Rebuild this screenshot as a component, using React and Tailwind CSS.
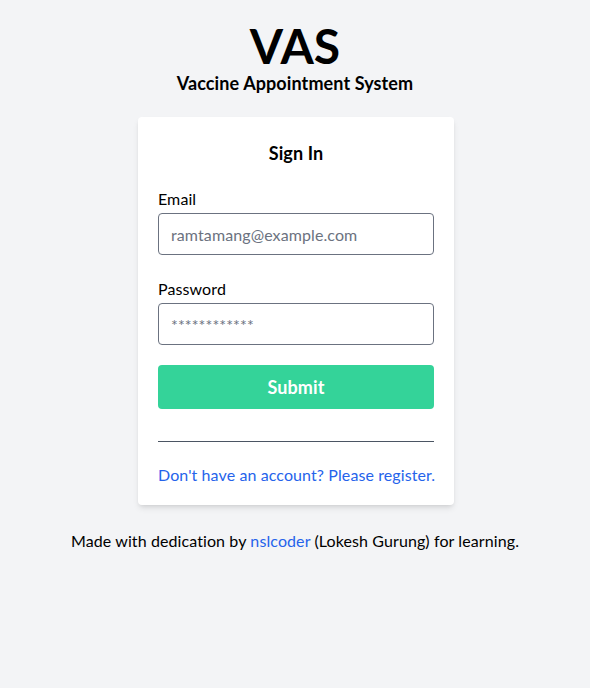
export default function App() {
  return (
    <main
      className="min-h-screen bg-[#f3f4f6] tracking-[0.1px] text-black"
      style={{ fontFamily: 'Lato, "Noto Sans", sans-serif' }}
    >
      <div className="flex flex-col items-center pt-5">
        <h1 className="text-5xl font-bold leading-[52px]">VAS</h1>
        <h2 className="text-lg font-bold leading-[22px]">Vaccine Appointment System</h2>

        <div className="mt-[23px] ml-[2px] w-[316px] rounded bg-white px-5 pt-[22px] pb-[18px] shadow-md">
          <h3 className="text-center text-lg font-bold leading-7">Sign In</h3>

          <form className="mt-5" onSubmit={(e) => e.preventDefault()}>
            <label htmlFor="email" className="block leading-6">Email</label>
            <input
              id="email"
              type="email"
              placeholder="ramtamang@example.com"
              className="mt-0.5 block h-[42px] w-full rounded border border-[#6b7280] px-3 placeholder:text-[#6b7280] focus:outline-none"
            />

            <label htmlFor="password" className="mt-[22px] block leading-6">Password</label>
            <input
              id="password"
              type="password"
              placeholder="************"
              className="mt-0.5 block h-[42px] w-full rounded border border-[#6b7280] px-3 placeholder:text-[#6b7280] focus:outline-none"
            />

            <button
              type="submit"
              className="mt-5 h-[44px] w-full rounded bg-[#34d399] text-lg font-bold text-white"
            >
              Submit
            </button>
          </form>

          <hr className="mt-8 border-[#4b5563]" />

          <p className="mt-[21px] whitespace-nowrap leading-6">
            <a href="#" className="text-[#2563eb]">Don't have an account? Please register.</a>
          </p>
        </div>

        <p className="mt-6 leading-6">
          Made with dedication by <a href="#" className="text-[#2563eb]">nslcoder</a> (Lokesh Gurung) for learning.
        </p>
      </div>
    </main>
  )
}
